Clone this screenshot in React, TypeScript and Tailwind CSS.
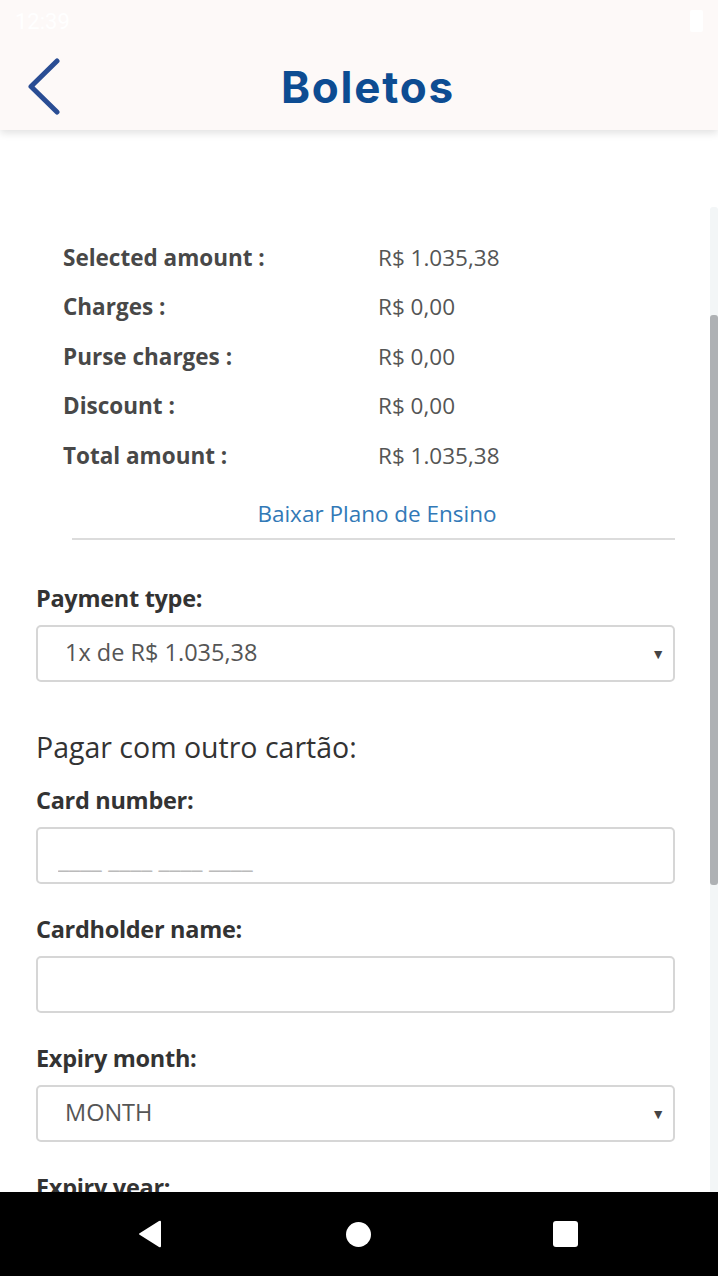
import { useState } from "react";

const bodyFont = { fontFamily: '"Open Sans", "Liberation Sans", sans-serif' };

const summary = [
    { label: "Selected amount :", value: "R$ 1.035,38" },
    { label: "Charges :", value: "R$ 0,00" },
    { label: "Purse charges :", value: "R$ 0,00" },
    { label: "Discount :", value: "R$ 0,00" },
    { label: "Total amount :", value: "R$ 1.035,38" },
];

const FieldLabel = ({ children }: { children: string }) => (
    <p className="text-[23.5px] font-bold text-[#333] leading-[32px] tracking-[-0.3px]">{children}</p>
);

const SelectBox = ({ value }: { value: string }) => (
    <div className="mt-[11px] h-[57px] border-2 border-[#d6d6d6] rounded-[5px] flex items-center justify-between pl-[27px] pr-[8px] bg-white">
        <span className="text-[23.5px] text-[#555]">{value}</span>
        <span className="text-[14px] text-[#444]">▼</span>
    </div>
);

const App = () => {
    const [cardNumber, setCardNumber] = useState("");
    const [holder, setHolder] = useState("");

    return (
        <div className="w-[718px] h-[1276px] flex flex-col bg-white overflow-hidden" style={bodyFont}>
            {/* status bar + header */}
            <div className="relative z-10 bg-[#fdf9f8] h-[130px] shadow-[0_3px_8px_rgba(0,0,0,0.12)] flex flex-col">
                <div className="h-[42px] flex items-center justify-between px-[15px]">
                    <span className="text-[22px] text-white" style={{ fontFamily: "Roboto, sans-serif" }}>12:39</span>
                    <div className="w-[13px] h-[22px] bg-white rounded-[2px]" />
                </div>
                <div className="flex-1 flex items-center relative">
                    <button className="absolute left-[22px] top-[15px]">
                        <svg width="40" height="58" viewBox="0 0 40 58">
                            <path d="M35 4 L9 29.5 L35 55" fill="none" stroke="#2a4d94" strokeWidth="5" strokeLinecap="round" strokeLinejoin="round" />
                        </svg>
                    </button>
                    <h1 className="w-full text-center text-[44px] font-bold text-[#0d4c92] tracking-[1.8px] pl-[18px] pt-[2px]" style={{ fontFamily: "Inter, Lato, sans-serif" }}>
                        Boletos
                    </h1>
                </div>
            </div>

            {/* scrolling content */}
            <div className="relative flex-1 overflow-hidden">
                <div className="pl-[36px] pr-[43px] pt-[103px]">
                    <div className="flex flex-col">
                        {summary.map((row) => (
                            <div key={row.label} className="flex items-center h-[49.5px]">
                                <span className="w-[342px] pl-[27px] text-[22.5px] font-bold text-[#484848]">{row.label}</span>
                                <span className="text-[22.5px] text-[#555]">{row.value}</span>
                            </div>
                        ))}
                    </div>
                    <div className="ml-[36px] mt-[18px] pb-[7px] border-b-2 border-[#dcdcdc] text-center leading-[30px]">
                        <a className="text-[22.5px] text-[#3279b7] pl-[7px]">Baixar Plano de Ensino</a>
                    </div>

                    <div className="mt-[42px]">
                        <FieldLabel>Payment type:</FieldLabel>
                        <SelectBox value="1x de R$ 1.035,38" />
                    </div>

                    <p className="mt-[46px] text-[28.5px] text-[#333] leading-[38px]">Pagar com outro cartão:</p>

                    <div className="mt-[18px]">
                        <FieldLabel>Card number:</FieldLabel>
                        <input
                            className="mt-[11px] w-full h-[57px] border-2 border-[#d6d6d6] rounded-[5px] px-[20px] pt-[6px] text-[25px] text-[#555] placeholder:text-[#bbb] outline-none"
                            placeholder="____ ____ ____ ____"
                            value={cardNumber}
                            onChange={(e) => setCardNumber(e.target.value)}
                        />
                    </div>

                    <div className="mt-[29px]">
                        <FieldLabel>Cardholder name:</FieldLabel>
                        <input
                            className="mt-[11px] w-full h-[57px] border-2 border-[#d6d6d6] rounded-[5px] px-[20px] text-[23px] text-[#555] outline-none"
                            value={holder}
                            onChange={(e) => setHolder(e.target.value)}
                        />
                    </div>

                    <div className="mt-[29px]">
                        <FieldLabel>Expiry month:</FieldLabel>
                        <SelectBox value="MONTH" />
                    </div>

                    <div className="mt-[29px]">
                        <FieldLabel>Expiry year:</FieldLabel>
                        <SelectBox value="YEAR" />
                    </div>
                </div>

                {/* scrollbar */}
                <div className="absolute right-0 top-[77px] bottom-0 w-[8px] bg-[#f3f6f7] rounded-t-[3px]">
                    <div className="absolute left-0 right-0 top-[108px] h-[570px] bg-[#aeb1b4] rounded-[3px]" />
                </div>
            </div>

            {/* navigation bar */}
            <div className="h-[84px] bg-black flex items-center justify-between pl-[138px] pr-[140px]">
                <svg width="25" height="28" viewBox="0 0 25 28">
                    <path d="M23 2 L23 26 Q23 28 21 27 L2 15 Q0 14 2 13 L21 1 Q23 0 23 2 Z" fill="#fff" />
                </svg>
                <div className="w-[25px] h-[25px] rounded-full bg-white" />
                <div className="w-[25px] h-[26px] rounded-[3px] bg-white" />
            </div>
        </div>
    );
};

export default App;
